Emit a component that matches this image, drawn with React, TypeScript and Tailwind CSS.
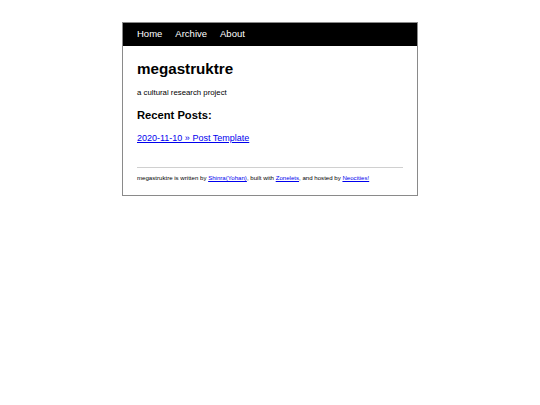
export default function App() {
  return (
    <div className="min-h-[405px] bg-white pt-[22px] font-['Liberation_Sans',Arial,sans-serif] text-black">
      <div className="mx-auto w-[296px] border border-[#8a8a8a]">
        <nav className="flex h-[23px] items-center gap-[13px] bg-black pl-[14px] text-[9.5px] text-white">
          <a href="#">Home</a>
          <a href="#">Archive</a>
          <a href="#">About</a>
        </nav>
        <main className="px-[14px] pt-[14px] pb-[14px]">
          <h1 className="text-[15.2px] leading-[17px] font-bold">megastruktre</h1>
          <p className="mt-[11px] text-[7.8px] leading-[9px]">a cultural research project</p>
          <h2 className="mt-[12px] text-[11.2px] leading-[13px] font-bold">Recent Posts:</h2>
          <ul className="mt-[11px] text-[9px] leading-[10px]">
            <li>
              <a href="#" className="text-[#0000ee] underline">
                2020-11-10 » Post Template
              </a>
            </li>
          </ul>
          <hr className="mt-[24px] border-t border-[#d0d0d0]" />
          <footer className="mt-[6px] text-[6.1px] leading-[7px]">
            megastruktre is written by{" "}
            <a href="#" className="text-[#0000ee] underline">Shinra(Yohan)</a>, built with{" "}
            <a href="#" className="text-[#0000ee] underline">Zonelets</a>, and hosted by{" "}
            <a href="#" className="text-[#0000ee] underline">Neocities!</a>
          </footer>
        </main>
      </div>
    </div>
  );
}
